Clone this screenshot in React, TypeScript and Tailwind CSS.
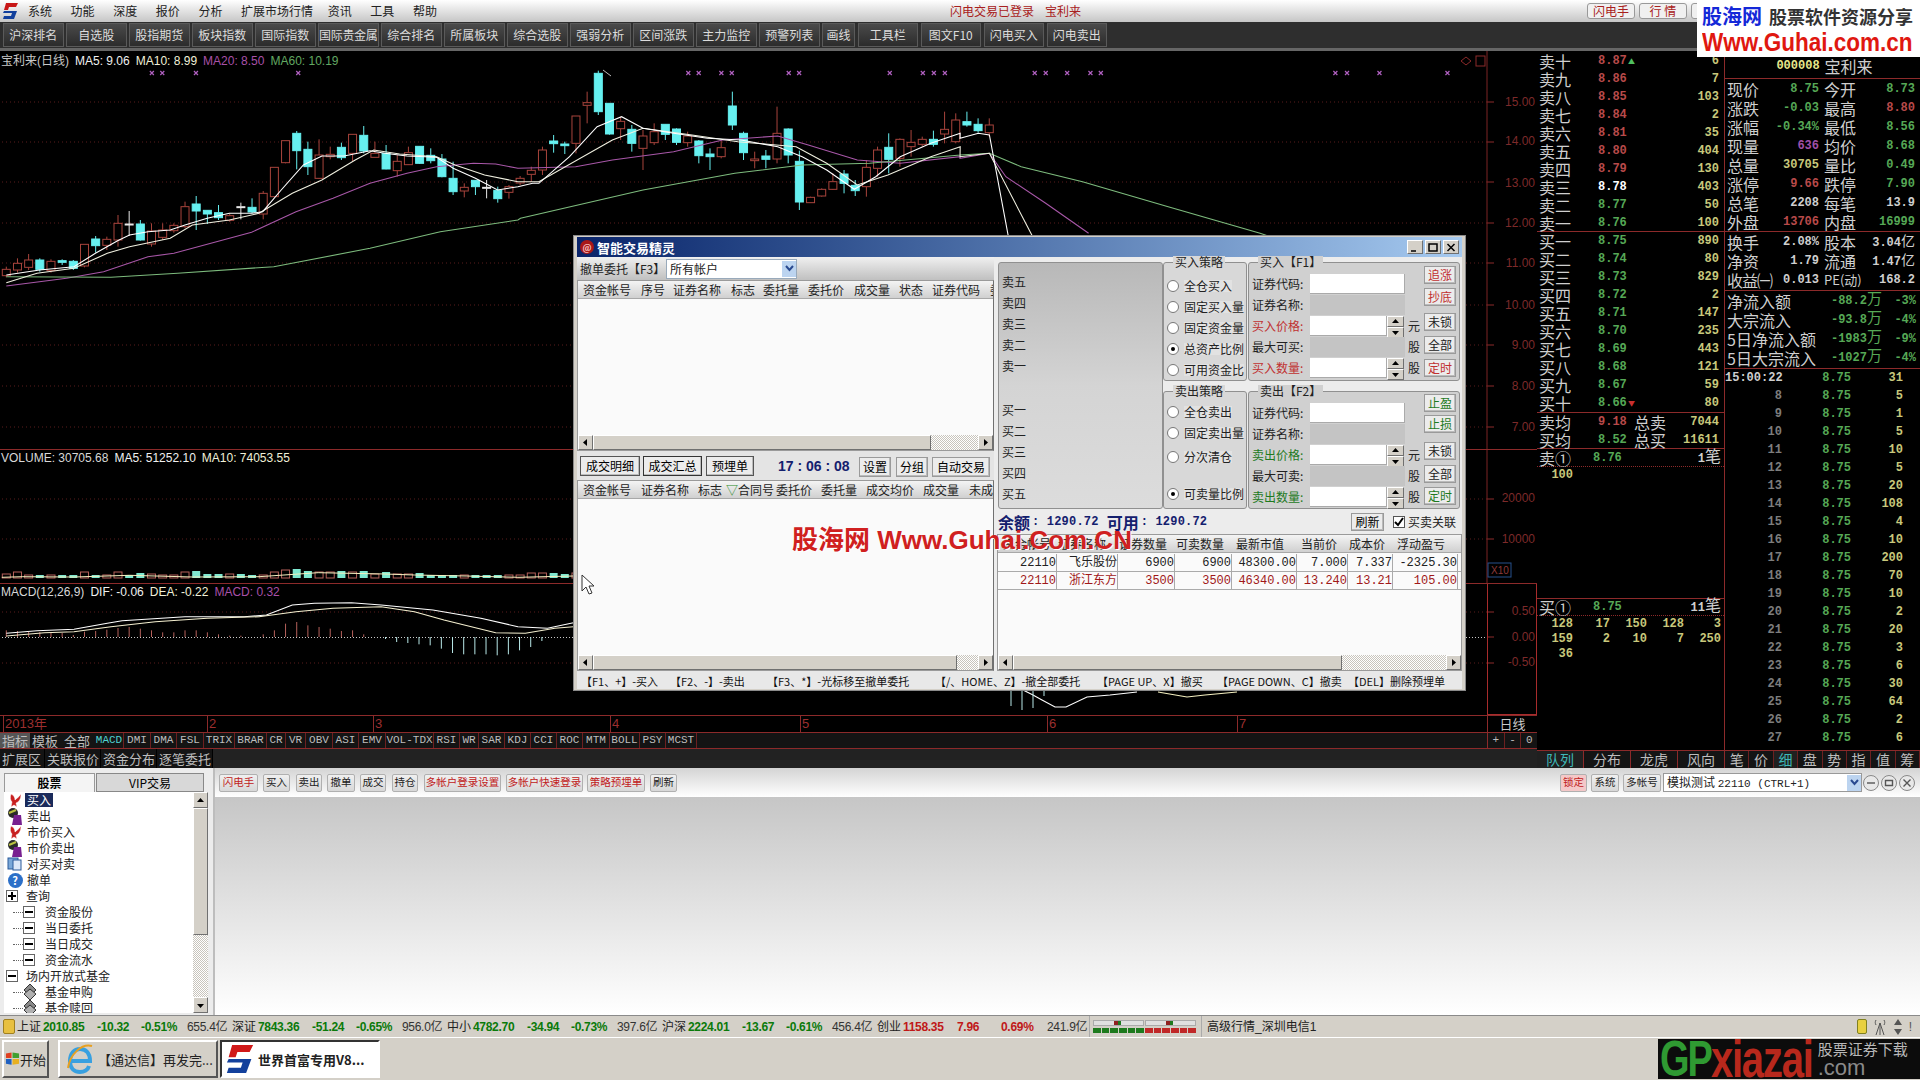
import type { ReactNode } from "react";

const MONO = "font-['Liberation_Mono','Noto_Sans_CJK_SC',monospace]";

type Pt = [number, number];
const z10 = (p: Pt[]): Pt[] => p.map(([x, y]) => [x / 2.703, 50 + y / 3]);
const z1 = (p: Pt[]): Pt[] => p.map(([x, y]) => [x / 1.633, y / 3]);
const z2 = (p: Pt[]): Pt[] => p.map(([x, y]) => [960 + x / 1.633, y / 3]);
const z9 = (p: Pt[]): Pt[] => p.map(([x, y]) => [x / 2.703, 440 + y / 3]);
const toPts = (p: Pt[]) => p.map(([x, y]) => `${x.toFixed(1)},${y.toFixed(1)}`).join(" ");

type Candle = [string, number, number, number, number];
const c10: Candle[] = [
  ["r", 650, 658, 677, 682], ["r", 625, 640, 660, 668], ["r", 612, 630, 652, 660], ["c", 625, 630, 658, 665],
  ["r", 628, 634, 662, 668], ["c", 628, 632, 637, 645], ["c", 630, 634, 655, 660], ["r", 583, 583, 648, 652],
  ["c", 558, 567, 587, 608], ["r", 560, 568, 586, 600], ["r", 495, 520, 570, 590], ["w", 483, 522, 524, 558],
  ["c", 510, 522, 570, 572], ["r", 520, 543, 582, 590], ["r", 520, 540, 562, 570], ["r", 520, 526, 542, 548],
  ["r", 455, 470, 530, 535], ["c", 438, 462, 483, 540], ["c", 480, 481, 492, 522], ["c", 465, 488, 503, 510],
  ["r", 490, 497, 511, 515], ["w", 458, 470, 472, 508], ["c", 445, 472, 486, 490], ["r", 423, 430, 492, 508],
  ["r", 352, 352, 440, 442], ["r", 272, 272, 338, 340], ["c", 243, 250, 302, 358], ["c", 275, 298, 350, 375],
  ["r", 268, 315, 385, 387], ["r", 290, 313, 320, 328], ["c", 278, 292, 323, 330], ["r", 253, 253, 310, 335],
  ["c", 228, 256, 303, 310], ["r", 275, 310, 322, 322], ["c", 285, 310, 357, 358], ["r", 315, 334, 362, 380],
  ["r", 290, 308, 344, 345], ["c", 288, 289, 340, 342], ["c", 295, 316, 332, 340], ["c", 312, 327, 380, 382],
  ["c", 335, 385, 425, 435], ["r", 400, 412, 423, 442], ["c", 390, 391, 410, 435], ["w", 390, 412, 414, 445],
  ["c", 410, 421, 446, 458], ["r", 405, 410, 427, 446], ["r", 378, 385, 399, 405], ["r", 350, 361, 373, 395],
  ["r", 290, 300, 360, 375], ["c", 255, 273, 281, 308], ["c", 275, 282, 287, 312], ["r", 198, 198, 280, 310],
];
const c1: Candle[] = [
  ["r", 275, 308, 316, 370], ["c", 212, 220, 335, 345], ["c", 310, 310, 402, 404], ["r", 350, 364, 386, 420],
  ["c", 375, 388, 430, 455], ["r", 390, 408, 445, 510], ["r", 370, 395, 428, 435], ["c", 372, 373, 403, 420],
  ["c", 385, 387, 427, 435], ["r", 395, 408, 428, 440], ["c", 420, 423, 467, 490], ["c", 445, 462, 470, 510],
  ["r", 420, 443, 470, 475], ["c", 275, 318, 375, 390], ["c", 395, 400, 458, 480], ["r", 455, 477, 482, 505],
  ["c", 450, 468, 478, 505], ["r", 320, 400, 477, 490], ["c", 385, 387, 465, 490], ["c", 452, 484, 606, 630],
  ["r", 590, 592, 608, 608], ["r", 565, 568, 588, 590], ["r", 520, 545, 568, 570], ["c", 510, 522, 550, 580],
  ["c", 540, 556, 572, 588], ["r", 480, 502, 560, 590], ["r", 440, 450, 505, 530], ["c", 400, 442, 478, 520],
  ["r", 415, 418, 475, 500], ["r", 390, 427, 440, 470], ["r", 410, 418, 433, 440], ["c", 392, 418, 433, 440],
  ["r", 335, 388, 402, 430], ["r", 340, 360, 425, 430], ["c", 335, 365, 375, 380], ["c", 355, 373, 392, 398],
  ["r", 355, 375, 398, 410],
];
const candles: Candle[] = [
  ...c10.map(([k, a, b, c, d]): Candle => [k, 50 + a / 3, 50 + b / 3, 50 + c / 3, 50 + d / 3]),
  ...c1.map(([k, a, b, c, d]): Candle => [k, a / 3, b / 3, c / 3, d / 3]),
];

const ma5 = [
  ...z10([[17, 675], [107, 660], [200, 650], [258, 610], [318, 572], [350, 555], [400, 545], [460, 540], [500, 525], [560, 505], [620, 490], [680, 490], [710, 485], [760, 420], [820, 345], [870, 318], [930, 318], [1000, 302], [1040, 310], [1100, 318], [1180, 322], [1225, 355], [1285, 385], [1345, 420], [1400, 410], [1440, 400]]),
  ...z1([[880, 550], [930, 470], [975, 380], [1015, 350], [1050, 385], [1100, 400], [1155, 415], [1210, 420], [1270, 440], [1310, 470], [1350, 510], [1395, 568], [1430, 530], [1470, 470], [1520, 430], [1568, 400]]),
  ...z2([[0, 415], [30, 400], [48, 405], [80, 720]]),
];
const ma10 = [
  ...z10([[17, 698], [100, 670], [200, 655], [290, 610], [350, 590], [460, 565], [520, 525], [620, 510], [700, 490], [790, 430], [870, 390], [960, 330], [1010, 300], [1080, 312], [1180, 320], [1230, 345], [1310, 375], [1400, 395], [1450, 395]]),
  ...z1([[880, 545], [1000, 420], [1050, 385], [1130, 405], [1205, 425], [1300, 440], [1350, 490], [1400, 555], [1450, 525], [1520, 470], [1568, 440]]),
  ...z2([[0, 470], [48, 460], [120, 715]]),
];
const ma20 = [
  ...z10([[17, 708], [180, 685], [280, 665], [400, 620], [470, 610], [680, 547], [800, 485], [900, 445], [1000, 400], [1100, 370], [1180, 350], [1280, 340], [1340, 342], [1400, 355]]),
  ...z1([[940, 500], [1000, 480], [1100, 455], [1180, 420], [1270, 408], [1320, 435], [1400, 480], [1470, 490], [1568, 470]]),
  ...z2([[0, 475], [48, 460], [75, 530], [140, 610], [210, 700]]),
];
const ma60 = [
  ...z10([[17, 680], [300, 682], [480, 670], [740, 650], [1000, 595], [1190, 545], [1400, 510]]),
  ...z1([[850, 655], [1050, 570], [1200, 520], [1310, 495], [1420, 490], [1568, 465]]),
  ...z2([[0, 465], [48, 460], [100, 500], [200, 545], [340, 620], [490, 700], [620, 780]]),
];
const dif = z9([[17, 580], [100, 572], [200, 568], [290, 550], [330, 542], [500, 530], [660, 530], [720, 525], [790, 495], [850, 490], [950, 488], [1030, 495], [1170, 510], [1300, 535], [1400, 560], [1480, 565], [1550, 548]]);
const dea = z9([[17, 588], [120, 578], [200, 575], [300, 560], [420, 545], [560, 535], [700, 530], [800, 515], [900, 505], [1030, 500], [1120, 515], [1200, 540], [1340, 578], [1420, 580], [1500, 565], [1550, 560]]);

const macdUp = [20, 18, 15, 15, 15, 12, 6, 16, 18, 22, 27, 30, 25, 20, 14, 14, 20, 20, 14, 8, 4, 4, 0, 8, 20, 40, 45, 35, 30, 25, 18, 20, 8];
const macdDown = [6, 15, 18, 22, 25, 35, 48, 52, 52, 52, 55, 52, 40, 30, 12];
const volH = [4, 6, 3, 3, 3, 3, 3, 6, 3, 3, 6, 3, 5, 4, 3, 3, 6, 7, 4, 4, 4, 4, 3, 3, 6, 8, 9, 7, 6, 6, 7, 6, 7, 4, 6, 4, 4, 5, 3, 3, 3, 3, 3, 3, 3, 3, 3, 5, 5, 5, 4, 5];
const xMarks = [...[248, 265, 320, 487, 1124, 1141, 1178, 1195, 1288, 1305, 1453, 1507, 1525, 1543].map((x) => x / 1.633), ...[122, 140, 175, 213, 230, 613, 632, 685, 796].map((x) => 960 + x / 1.633)];
const cx = (i: number) => 6.3 + 11.17 * i;

const axisY = [102, 142, 182, 223, 263, 305, 345, 386, 427];
const axisLabels: [string, number][] = [["15.00", 102], ["14.00", 141], ["13.00", 183], ["12.00", 223], ["11.00", 263], ["10.00", 305], ["9.00", 345], ["8.00", 386], ["7.00", 427], ["20000", 498], ["10000", 539], ["0.50", 611], ["0.00", 637], ["-0.50", 662]];

function ChartDrawing() {
  return (
    <svg className="absolute inset-0" width={1537} height={664} viewBox="0 51 1537 664" fill="none">
      {[...axisY, 499, 539, 612, 663].map((y) => (
        <line key={y} x1={2} x2={1487} y1={y} y2={y} stroke="#5a1c1c" strokeDasharray="1 3" />
      ))}
      <line x1={2} x2={1487} y1={637.5} y2={637.5} stroke="#c8c8c8" strokeDasharray="1 2" />
      {[...axisY, 499, 539, 612, 637, 663].map((y) => (
        <line key={y} x1={1487} x2={1494} y1={y} y2={y} stroke="#8c2a2a" />
      ))}
      {candles.map(([k, hi, top, bot, lo], i) => {
        const x = cx(i);
        const stroke = k === "r" ? "#a8443c" : k === "c" ? "#66f0f0" : "#e8e8e8";
        return (
          <g key={i}>
            <line x1={x} x2={x} y1={hi} y2={top} stroke={stroke} />
            <line x1={x} x2={x} y1={bot} y2={lo} stroke={stroke} />
            <rect x={x - 4} y={top} width={8} height={Math.max(bot - top, 1)} stroke={stroke} fill={k === "c" ? "#66f0f0" : "#000"} />
          </g>
        );
      })}
      <polyline points={toPts(ma20)} stroke="#a857a8" strokeWidth={1.1} />
      <polyline points={toPts(ma60)} stroke="#7dbb7d" strokeWidth={1.1} />
      <polyline points={toPts(ma10)} stroke="#f0f0e0" strokeWidth={1.1} />
      <polyline points={toPts(ma5)} stroke="#ffffff" strokeWidth={1.1} />
      {xMarks.map((x) => (
        <path key={x} d={`M${x - 2} 71L${x + 2} 75M${x + 2} 71L${x - 2} 75`} stroke="#b060c0" strokeWidth={1.2} />
      ))}
      <path d="M1466 57L1471 61L1466 65L1461 61Z" stroke="#8c2a2a" />
      <rect x={1476} y={56} width={9} height={10} stroke="#8c2a2a" />
      <path d="M603 70L611 76" stroke="#bbb" />
      {volH.map((h, i) => {
        const k = candles[i][0];
        const x = cx(i);
        return k === "r" ? (
          <rect key={i} x={x - 4} y={578 - h} width={8} height={h} stroke="#b5605a" />
        ) : (
          <rect key={i} x={x - 4} y={578 - h} width={8} height={h} fill="#7fe8d0" />
        );
      })}
      <polyline points={toPts(z9([[5, 412], [60, 410], [200, 411], [350, 406], [520, 411], [700, 410], [860, 398], [1040, 402], [1120, 405], [1260, 408], [1400, 412], [1550, 408]]))} stroke="#f5f0c0" />
      {macdUp.map((h, i) => (h ? <line key={i} x1={cx(i)} x2={cx(i)} y1={637 - h / 3} y2={637} stroke="#b5605a" /> : null))}
      {macdDown.map((h, i) => (
        <line key={i} x1={385.5 + 11.17 * i} x2={385.5 + 11.17 * i} y1={637} y2={637 + h / 3} stroke="#b8e8e8" />
      ))}
      <polyline points={toPts(dif)} stroke="#fff" strokeWidth={1.1} />
      <polyline points={toPts(dea)} stroke="#f5f0d0" strokeWidth={1.1} />
      <polyline points="1023,690 1033,695 1042,700 1055,707 1066,707 1087,697 1110,695 1137,692" stroke="#fff" strokeWidth={1.1} />
      <polyline points="1158,692 1187,697 1205,695 1237,692" stroke="#f5f0c0" strokeWidth={1.1} />
      {[1011, 1022, 1033, 1044].map((x, i) => (
        <line key={x} x1={x} x2={x} y1={690} y2={[706, 710, 708, 696][i]} stroke="#b8e8e8" />
      ))}
      <line x1={1487} x2={1487} y1={51} y2={583} stroke="#7c2424" />
      <rect x={1487.5} y={583.5} width={49} height={131} stroke="#a82c2c" />
      <rect x={1488} y={563} width={23} height={14} stroke="#27508c" />
    </svg>
  );
}

function Legend({ items, className }: { items: [string, string][]; className: string }) {
  return (
    <div className={`relative flex gap-[6px] pl-[1px] text-[12px] leading-[14px] whitespace-nowrap font-['Liberation_Sans','Noto_Sans_CJK_SC',sans-serif] ${className}`}>
      {items.map(([t, c]) => (
        <span key={t} className={c}>{t}</span>
      ))}
    </div>
  );
}

const chartFoot = [
  ["MACD", "w-[29px]", "text-[#4fd0d0]"], ["DMI", "w-[27px]", ""], ["DMA", "w-[26px]", ""], ["FSL", "w-[27px]", ""], ["TRIX", "w-[31px]", ""], ["BRAR", "w-[32px]", ""],
  ["CR", "w-[19px]", ""], ["VR", "w-[20px]", ""], ["OBV", "w-[27px]", ""], ["ASI", "w-[26px]", ""], ["EMV", "w-[27px]", ""], ["VOL-TDX", "w-[48px]", ""],
  ["RSI", "w-[26px]", ""], ["WR", "w-[19px]", ""], ["SAR", "w-[26px]", ""], ["KDJ", "w-[26px]", ""], ["CCI", "w-[26px]", ""], ["ROC", "w-[26px]", ""],
  ["MTM", "w-[27px]", ""], ["BOLL", "w-[30px]", ""], ["PSY", "w-[26px]", ""], ["MCST", "w-[31px]", ""],
];

function ChartColumn() {
  return (
    <div className="flex h-full w-[1537px] shrink-0 flex-col">
      <div className="relative h-[664px] bg-black">
        <ChartDrawing />
        <div className="relative flex h-[398px] flex-col pt-[3px]">
          <Legend
            className="text-[#d8d8d8]"
            items={[["宝利来(日线)", "text-[#c8c8c8]"], ["MA5: 9.06", "text-[#f0f0f0]"], ["MA10: 8.99", "text-[#f0f0d8]"], ["MA20: 8.50", "text-[#a850a8]"], ["MA60: 10.19", "text-[#62a862]"]]}
          />
        </div>
        <div className="relative h-[134px] border-t border-[#8c2a2a] pt-[1px]">
          <Legend className="w-[1487px]" items={[["VOLUME: 30705.68", "text-[#d8d8d8]"], ["MA5: 51252.10", "text-[#f0f0f0]"], ["MA10: 74053.55", "text-[#f0f0d8]"]]} />
        </div>
        <div className="relative h-[132px] border-t border-[#8c2a2a] pt-[1px]">
          <Legend className="w-[1487px]" items={[["MACD(12,26,9)", "text-[#d8d8d8]"], ["DIF: -0.06", "text-[#f0f0f0]"], ["DEA: -0.22", "text-[#f0f0d8]"], ["MACD: 0.32", "text-[#a850a8]"]]} />
        </div>
        {axisLabels.map(([t, y]) => (
          <span key={t} className="absolute right-[2px] -translate-y-1/2 text-[12px] leading-none text-[#7d2a2a] font-['Liberation_Sans',sans-serif]" style={{ top: y - 51 }}>
            {t}
          </span>
        ))}
        <span className="absolute left-[1491px] top-[514px] text-[10px] leading-[12px] text-[#8c3a3a] font-['Liberation_Sans',sans-serif]">X10</span>
      </div>

      <div className="flex h-[17px] border-t border-[#8c2a2a] bg-black">
        <div className="relative flex-1 border-r border-[#8c2a2a] text-[13px] leading-[16px] text-[#9c2f2f]">
          {[["2013年", 3], ["2", 207], ["3", 373], ["4", 610], ["5", 800], ["6", 1047], ["7", 1237]].map(([t, x]) => (
            <span key={t} className="absolute top-0 border-l border-[#8c2a2a] pl-[1px] font-['Liberation_Sans','Noto_Sans_CJK_SC',sans-serif]" style={{ left: x }}>
              {t}
            </span>
          ))}
        </div>
        <div className="w-[49px] text-center text-[13px] leading-[16px] text-[#c8c8c8]">日线</div>
      </div>

      <div className="flex h-[16px] border-t border-[#8c2a2a] bg-[#141414] text-[#bdbdbd]">
        <div className="flex w-[95px] text-[13px] leading-[15px]">
          <span className="w-[30px] bg-[#555] pl-[2px]">指标</span>
          <span className="w-[32px] pl-[2px]">模板</span>
          <span className="pl-[2px]">全部</span>
        </div>
        <div className={`flex text-[11px] leading-[15px] ${MONO}`}>
          {chartFoot.map(([t, w, c]) => (
            <span key={t} className={`border-r border-[#6c2020] text-center ${w} ${c}`}>{t}</span>
          ))}
        </div>
        <div className="flex-1 border-r border-[#8c2a2a]" />
        <div className={`flex w-[49px] text-center text-[11px] leading-[15px] ${MONO}`}>
          <span className="flex-1 border-r border-[#6c2020]">+</span>
          <span className="flex-1 border-r border-[#6c2020]">-</span>
          <span className="flex-1">0</span>
        </div>
      </div>

      <div className="flex h-[20px] border-t border-[#8c2a2a] bg-[#222] text-[13px] leading-[19px] whitespace-nowrap text-[#bdbdbd]">
        {[["扩展区", "w-[45px]"], ["关联报价", "w-[56px]"], ["资金分布", "w-[56px]"], ["逐笔委托", "w-[56px]"]].map(([t, w]) => (
          <span key={t} className={`border-r border-black bg-[#141414] pl-[2px] ${w}`}>{t}</span>
        ))}
      </div>
    </div>
  );
}

const asks: [string, string, string, string][] = [
  ["卖十", "8.87", "text-[#b84a4a]", "6"], ["卖九", "8.86", "text-[#b84a4a]", "7"], ["卖八", "8.85", "text-[#b84a4a]", "103"], ["卖七", "8.84", "text-[#b84a4a]", "2"], ["卖六", "8.81", "text-[#b84a4a]", "35"],
  ["卖五", "8.80", "text-[#b84a4a]", "404"], ["卖四", "8.79", "text-[#b84a4a]", "130"], ["卖三", "8.78", "text-white", "403"], ["卖二", "8.77", "text-[#56a856]", "50"], ["卖一", "8.76", "text-[#56a856]", "100"],
];
const bids: [string, string, string, string][] = [
  ["买一", "8.75", "text-[#56a856]", "890"], ["买二", "8.74", "text-[#56a856]", "80"], ["买三", "8.73", "text-[#56a856]", "829"], ["买四", "8.72", "text-[#56a856]", "2"], ["买五", "8.71", "text-[#56a856]", "147"],
  ["买六", "8.70", "text-[#56a856]", "235"], ["买七", "8.69", "text-[#56a856]", "443"], ["买八", "8.68", "text-[#56a856]", "121"], ["买九", "8.67", "text-[#56a856]", "59"], ["买十", "8.66", "text-[#56a856]", "80"],
];

const LBL = "text-[16px] leading-none text-[#cfcfcf] whitespace-nowrap";
const NUM = `text-[12px] font-bold leading-none ${MONO}`;

function BookRow({ row, mark }: { row: [string, string, string, string]; mark?: ReactNode }) {
  return (
    <div className="flex h-[18px] items-center">
      <span className={`w-[61px] pl-[2px] ${LBL}`}>{row[0]}</span>
      <span className={`w-[30px] ${NUM} ${row[2]}`}>{row[1]}</span>
      <span className="w-[12px] text-[7px] leading-none">{mark}</span>
      <span className={`flex-1 pr-[5px] text-right ${NUM} text-[#c8c87c]`}>{row[3]}</span>
    </div>
  );
}

function QueueRow({ cells }: { cells: string[] }) {
  return (
    <div className={`flex h-[15px] items-center ${NUM} text-[#c8c87c]`}>
      {cells.map((c, i) => (
        <span key={i} className={`text-right ${i === 0 ? "w-[36px]" : "w-[37px]"}`}>{c}</span>
      ))}
    </div>
  );
}

function BookColumn() {
  return (
    <div className="flex h-full w-[188px] shrink-0 flex-col border-r border-[#8c2a2a]">
      <div className="mt-[1px] h-[180px] border-b border-[#8c2a2a]">
        {asks.map((r, i) => (
          <BookRow key={r[0]} row={r} mark={i === 0 ? <span className="text-[#4fc060]">▲</span> : undefined} />
        ))}
      </div>
      <div className="h-[181px] border-b border-[#8c2a2a]">
        {bids.map((r, i) => (
          <BookRow key={r[0]} row={r} mark={i === 9 ? <span className="text-[#c83030]">▼</span> : undefined} />
        ))}
      </div>
      <div className="h-[36px] border-b border-[#8c2a2a]">
        <div className="flex h-[18px] items-center">
          <span className={`w-[61px] pl-[2px] ${LBL}`}>卖均</span>
          <span className={`w-[36px] ${NUM} text-[#b84a4a]`}>9.18</span>
          <span className={`${LBL}`}>总卖</span>
          <span className={`flex-1 pr-[5px] text-right ${NUM} text-[#c8c87c]`}>7044</span>
        </div>
        <div className="flex h-[18px] items-center">
          <span className={`w-[61px] pl-[2px] ${LBL}`}>买均</span>
          <span className={`w-[36px] ${NUM} text-[#56a856]`}>8.52</span>
          <span className={`${LBL}`}>总买</span>
          <span className={`flex-1 pr-[5px] text-right ${NUM} text-[#c8c87c]`}>11611</span>
        </div>
      </div>
      <div className="flex h-[18px] items-center border-b border-dotted border-[#8c2a2a]">
        <span className={`w-[56px] pl-[2px] ${LBL}`}>卖①</span>
        <span className={`flex-1 ${NUM} text-[#56a856]`}>8.76</span>
        <span className={`pr-[3px] ${NUM} text-[#cfcfcf]`}>1<span className="text-[16px] font-normal">笔</span></span>
      </div>
      <QueueRow cells={["100"]} />
      <div className="h-[117px] border-b border-[#8c2a2a]" />
      <div className="flex h-[17px] items-center border-b border-dotted border-[#8c2a2a]">
        <span className={`w-[56px] pl-[2px] ${LBL}`}>买①</span>
        <span className={`flex-1 ${NUM} text-[#56a856]`}>8.75</span>
        <span className={`pr-[3px] ${NUM} text-[#cfcfcf]`}>11<span className="text-[16px] font-normal">笔</span></span>
      </div>
      <QueueRow cells={["128", "17", "150", "128", "3"]} />
      <QueueRow cells={["159", "2", "10", "7", "250"]} />
      <QueueRow cells={["36"]} />
    </div>
  );
}

const quote: [string, string, string, string, string, string][] = [
  ["现价", "8.75", "text-[#56a856]", "今开", "8.73", "text-[#56a856]"],
  ["涨跌", "-0.03", "text-[#56a856]", "最高", "8.80", "text-[#b84a4a]"],
  ["涨幅", "-0.34%", "text-[#56a856]", "最低", "8.56", "text-[#56a856]"],
  ["现量", "636", "text-[#a050a8]", "均价", "8.68", "text-[#56a856]"],
  ["总量", "30705", "text-[#c8c87c]", "量比", "0.49", "text-[#56a856]"],
  ["涨停", "9.66", "text-[#b84a4a]", "跌停", "7.90", "text-[#56a856]"],
  ["总笔", "2208", "text-[#cfcfcf]", "每笔", "13.9", "text-[#cfcfcf]"],
  ["外盘", "13706", "text-[#b84a4a]", "内盘", "16999", "text-[#56a856]"],
];
const share: [string, ReactNode, string, ReactNode][] = [
  ["换手", "2.08%", "股本", <>3.04<span className="text-[14px] font-normal">亿</span></>],
  ["净资", "1.79", "流通", <>1.47<span className="text-[14px] font-normal">亿</span></>],
  ["收益㈠", "0.013", "PE(动)", "168.2"],
];
const flows: [string, string, string][] = [
  ["净流入额", "-88.2", "-3%"],
  ["大宗流入", "-93.8", "-4%"],
  ["5日净流入额", "-1983", "-9%"],
  ["5日大宗流入", "-1027", "-4%"],
];
const ticks: [string, string][] = [
  ["15:00:22", "31"], ["8", "5"], ["9", "1"], ["10", "5"], ["11", "10"], ["12", "5"], ["13", "20"], ["14", "108"], ["15", "4"], ["16", "10"], ["17", "200"],
  ["18", "70"], ["19", "10"], ["20", "2"], ["21", "20"], ["22", "3"], ["23", "6"], ["24", "30"], ["25", "64"], ["26", "2"], ["27", "6"],
];

function QuoteColumn() {
  return (
    <div className="flex h-full flex-1 flex-col">
      <div className="flex h-[28px] items-center justify-center border-b border-[#8c2a2a] pt-[3px] pl-[4px]">
        <span className={`mr-[5px] ${NUM} text-[#e8e88c]`}>000008</span>
        <span className={LBL}>宝利来</span>
      </div>
      <div className="h-[153px] border-b border-[#8c2a2a]">
        {quote.map((q) => (
          <div key={q[0]} className="flex h-[19px] items-center">
            <div className="flex w-[94px] items-center justify-between pl-[2px]">
              <span className={LBL}>{q[0]}</span>
              <span className={`${NUM} ${q[2]}`}>{q[1]}</span>
            </div>
            <div className="ml-[5px] flex w-[91px] items-center justify-between">
              <span className={LBL}>{q[3]}</span>
              <span className={`${NUM} ${q[5]}`}>{q[4]}</span>
            </div>
          </div>
        ))}
      </div>
      <div className="h-[59px] border-b border-[#8c2a2a]">
        {share.map((q) => (
          <div key={q[0]} className="flex h-[19px] items-center">
            <div className="flex w-[94px] items-center justify-between pl-[2px]">
              <span className={`${LBL} ${q[0].length > 2 ? "tracking-[-1px]" : ""}`}>{q[0]}</span>
              <span className={`${NUM} text-[#cfcfcf]`}>{q[1]}</span>
            </div>
            <div className="ml-[5px] flex w-[91px] items-center justify-between">
              <span className={`${q[2].length > 2 ? "text-[13px] leading-none whitespace-nowrap text-[#cfcfcf]" : LBL}`}>{q[2]}</span>
              <span className={`${NUM} text-[#cfcfcf]`}>{q[3]}</span>
            </div>
          </div>
        ))}
      </div>
      <div className="h-[78px] border-b border-[#8c2a2a]">
        {flows.map((f) => (
          <div key={f[0]} className="flex h-[19px] items-center">
            <span className={`w-[100px] pl-[2px] ${LBL}`}>{f[0]}</span>
            <span className={`w-[57px] text-right ${NUM} text-[#56a856]`}>
              {f[1]}<span className="text-[15px] font-normal">万</span>
            </span>
            <span className={`w-[34px] text-right ${NUM} text-[#56a856]`}>{f[2]}</span>
          </div>
        ))}
      </div>
      {ticks.map((t, i) => (
        <div key={t[0]} className={`flex h-[18px] items-center ${NUM}`}>
          <span className={`w-[57px] text-right ${i === 0 ? "text-[#cfcfcf]" : "text-[#7d7d7d]"}`}>{t[0]}</span>
          <span className="w-[69px] text-right text-[#56a856]">8.75</span>
          <span className="w-[52px] text-right text-[#c8c87c]">{t[1]}</span>
        </div>
      ))}
    </div>
  );
}

function RightTabs() {
  const wide = [["队列", "text-[#3fb8b8] bg-[#202020]"], ["分布", ""], ["龙虎", ""], ["风向", ""]];
  const narrow = [["笔", ""], ["价", ""], ["细", "text-[#3fb8b8] bg-[#202020]"], ["盘", ""], ["势", ""], ["指", ""], ["值", ""], ["筹", ""]];
  return (
    <div className="flex h-[18px] border-t border-[#8c2a2a] bg-[#141414] text-[14px] leading-[17px] text-[#bdbdbd]">
      <div className="flex w-[188px]">
        {wide.map(([t, c]) => (
          <span key={t} className={`flex-1 border-r border-[#8c2a2a] text-center ${c}`}>{t}</span>
        ))}
      </div>
      <div className="flex flex-1">
        {narrow.map(([t, c]) => (
          <span key={t} className={`flex-1 border-r border-[#6c2020] text-center ${c}`}>{t}</span>
        ))}
      </div>
    </div>
  );
}

function Arrow({ dir }: { dir: "l" | "r" | "u" | "d" }) {
  const pts = { l: "6,1 2,4.5 6,8", r: "3,1 7,4.5 3,8", u: "1,6 4.5,2 8,6", d: "1,3 4.5,7 8,3" }[dir];
  return (
    <svg width={9} height={9}>
      <polygon points={pts} fill="#000" />
    </svg>
  );
}

const RAISED = "border border-t-white border-l-white border-r-[#707070] border-b-[#707070] bg-[#d4d0c8]";
const CHECKER = "bg-[repeating-conic-gradient(#c8c4bc_0_25%,#ffffff_0_50%)] bg-[length:2px_2px]";

function HScroll({ thumb }: { thumb: string }) {
  return (
    <div className={`flex h-[15px] shrink-0 ${CHECKER}`}>
      <div className={`flex w-[15px] items-center justify-center ${RAISED}`}><Arrow dir="l" /></div>
      <div className={`${thumb} ${RAISED}`} />
      <div className="flex-1" />
      <div className={`flex w-[15px] items-center justify-center ${RAISED}`}><Arrow dir="r" /></div>
    </div>
  );
}

function Head({ cols }: { cols: [string, string][] }) {
  return (
    <div className="flex h-[18px] shrink-0 items-center overflow-hidden border-b border-[#a8a8a8] bg-gradient-to-b from-[#f4f4f4] to-[#d0d0d0] pl-[5px] text-[12px] leading-none whitespace-nowrap text-[#222]">
      {cols.map(([t, w]) => (
        <span key={t} className={`shrink-0 ${w}`}>
          {t[0] === "▽" ? <><span className="text-[#2a8a2a]">▽</span>{t.slice(1)}</> : t}
        </span>
      ))}
    </div>
  );
}

function WinBtn({ children, className = "" }: { children: ReactNode; className?: string }) {
  return (
    <div className={`flex items-center justify-center border border-[#9a9a9a] bg-[#ececec] text-[12px] leading-none shadow-[inset_-1px_-1px_0_#bbb] ${className}`}>
      {children}
    </div>
  );
}

function Radio({ on, label, className = "" }: { on?: boolean; label: string; className?: string }) {
  return (
    <div className={`flex h-[21px] items-center pl-[3px] ${className}`}>
      <span className="flex size-[12px] items-center justify-center rounded-full border border-[#777] bg-white">
        {on && <span className="size-[4px] rounded-full bg-black" />}
      </span>
      <span className="ml-[5px] bg-[#e2e2e2] text-[12px] leading-none text-[#222]">{label}</span>
    </div>
  );
}

function Spin() {
  return (
    <div className="flex h-[20px] w-[17px] flex-col">
      <div className={`flex flex-1 items-center justify-center ${RAISED}`}><Arrow dir="u" /></div>
      <div className={`flex flex-1 items-center justify-center ${RAISED}`}><Arrow dir="d" /></div>
    </div>
  );
}

function FormRow({ label, kind, unit, tint }: { label: string; kind: "in" | "off" | "spin"; unit?: string; tint?: string }) {
  return (
    <div className="flex h-[21px] items-center">
      <span className={`w-[58px] text-[12px] leading-none ${tint ?? "text-[#222]"}`}>{label}:</span>
      {kind === "spin" ? (
        <div className="flex w-[95px]">
          <div className="h-[20px] w-[77px] border-r border-b border-[#aaa] bg-white" />
          <Spin />
        </div>
      ) : (
        <div className={`h-[20px] w-[95px] ${kind === "in" ? "border-r border-b border-[#aaa] bg-white" : "bg-[#c4c4c4]"}`} />
      )}
      <span className="ml-[3px] text-[12px] leading-none text-[#222]">{unit}</span>
    </div>
  );
}

function ActionBtn({ label, className, tone }: { label: string; className: string; tone: string }) {
  return <WinBtn className={`h-[18px] w-[32px] ${tone} ${className}`}>{label}</WinBtn>;
}

function Dialog() {
  const head1: [string, string][] = [["资金帐号", "w-[58px]"], ["序号", "w-[32px]"], ["证券名称", "w-[58px]"], ["标志", "w-[32px]"], ["委托量", "w-[45px]"], ["委托价", "w-[46px]"], ["成交量", "w-[45px]"], ["状态", "w-[33px]"], ["证券代码", "w-[58px]"], ["委", "w-[14px]"]];
  const head2: [string, string][] = [["资金帐号", "w-[58px]"], ["证券名称", "w-[57px]"], ["标志", "w-[28px]"], ["▽合同号", "w-[50px]"], ["委托价", "w-[45px]"], ["委托量", "w-[45px]"], ["成交均价", "w-[57px]"], ["成交量", "w-[46px]"], ["未成", "w-[30px]"]];
  const posCols = ["w-[59px] justify-end", "w-[61px] justify-end", "w-[57px] justify-end", "w-[57px] justify-end", "w-[65px] justify-end", "w-[51px] justify-end", "w-[45px] justify-end", "w-[65px] justify-end"];
  const rows = [
    { cells: ["22110", "飞乐股份", "6900", "6900", "48300.00", "7.000", "7.337", "-2325.30"], tone: "text-[#222]" },
    { cells: ["22110", "浙江东方", "3500", "3500", "46340.00", "13.240", "13.21", "105.00"], tone: "text-[#a01818]" },
  ];
  return (
    <div className="absolute left-[574px] top-[236px] flex h-[454px] w-[891px] flex-col border-x-[3px] border-y-[1px] border-[#d4d0c8] bg-[#ececec] shadow-[0_0_0_1px_#8a8a8a]">
      <div className="flex h-[20px] shrink-0 items-center bg-gradient-to-r from-[#0a246a] to-[#a6caf0] pl-[3px] pr-[3px]">
        <span className="flex size-[14px] items-center justify-center rounded-full bg-[#a81818] text-[9px] font-bold leading-none text-[#f8c0c0]">@</span>
        <span className="ml-[3px] flex-1 text-[13px] font-bold leading-none text-white">智能交易精灵</span>
        {[0, 1, 2].map((i) => (
          <div key={i} className={`ml-[2px] flex h-[14px] w-[16px] items-center justify-center ${RAISED}`}>
            <svg width={10} height={9} stroke="#000" strokeWidth={1.5} fill="none">
              {i === 0 && <path d="M1 8H6" />}
              {i === 1 && <rect x={1} y={1} width={8} height={7} />}
              {i === 2 && <path d="M1.5 1L8.5 8M8.5 1L1.5 8" />}
            </svg>
          </div>
        ))}
      </div>

      <div className="flex flex-1">
        <div className="flex w-[417px] shrink-0 flex-col">
          <div className="flex h-[23px] shrink-0 items-center bg-gradient-to-b from-[#f0f0f0] to-[#c0c0c0] pl-[3px]">
            <span className="w-[86px] text-[12px] leading-none text-[#222]">撤单委托【F3】</span>
            <div className="flex h-[20px] w-[131px] items-center border border-[#9ab] bg-white pl-[3px] text-[12px] leading-none text-[#222]">
              <span className="flex-1">所有帐户</span>
              <span className="flex h-[16px] w-[14px] items-center justify-center bg-[#bcd4f0] text-[#1c3c88]">
                <svg width={9} height={7} fill="none" stroke="#2a4a90" strokeWidth={2}><path d="M1 1L4.5 5L8 1" /></svg>
              </span>
            </div>
          </div>
          <div className="flex h-[171px] shrink-0 flex-col border border-[#9a9a9a] border-r-[#707070]">
            <Head cols={head1} />
            <div className="flex-1 bg-[#fafafa]" />
            <HScroll thumb="w-[338px]" />
          </div>
          <div className="flex h-[29px] shrink-0 items-center bg-[#e4e4e4] pl-[3px]">
            <WinBtn className="h-[20px] w-[60px] border-[#555] shadow-[inset_-1px_-1px_0_#666]">成交明细</WinBtn>
            <WinBtn className="ml-[3px] h-[20px] w-[59px] border-[#333] bg-[#d8d8d8]">成交汇总</WinBtn>
            <WinBtn className="ml-[4px] h-[20px] w-[48px] border-[#555] shadow-[inset_-1px_-1px_0_#666]">预埋单</WinBtn>
            <span className="ml-[24px] w-[81px] text-[14px] font-bold leading-none text-[#14206e] font-['Liberation_Sans',sans-serif]">17 : 06 : 08</span>
            <WinBtn className="mt-[2px] h-[20px] w-[32px]">设置</WinBtn>
            <WinBtn className="ml-[5px] mt-[2px] h-[20px] w-[32px]">分组</WinBtn>
            <WinBtn className="ml-[4px] mt-[2px] h-[20px] w-[58px]">自动交易</WinBtn>
          </div>
          <div className="flex flex-1 flex-col border border-[#9a9a9a] border-r-[#707070]">
            <Head cols={head2} />
            <div className="flex-1 bg-[#fafafa]" />
            <HScroll thumb="w-[364px]" />
          </div>
        </div>

        <div className="ml-[3px] flex flex-1 flex-col">
          <div className="flex h-[252px] shrink-0 pt-[5px] pl-[1px] text-[12px] leading-none text-[#222]">
            <div className="flex h-[247px] w-[165px] flex-col rounded-[3px] border border-[#909090] bg-gradient-to-b from-[#b8b8b8] via-[#d4d4d4] to-[#dcdcdc] pl-[3px] pt-[9px] text-[12px]">
              {["卖五", "卖四", "卖三", "卖二", "卖一"].map((t) => (
                <div key={t} className="flex h-[20.8px] items-center">{t}</div>
              ))}
              <div className="h-[24px]" />
              {["买一", "买二", "买三", "买四", "买五"].map((t) => (
                <div key={t} className="flex h-[20.9px] items-center">{t}</div>
              ))}
            </div>
            <div className="flex w-[297px] flex-col">
              <div className="flex h-[119px]">
                <div className="relative h-full w-[84px] rounded-[3px] border border-[#909090] bg-[#d8d8d8] pt-[12px]">
                  <span className="absolute -top-[7px] left-[9px] bg-[#d8d8d8] px-[2px]">买入策略</span>
                  <Radio label="全仓买入" />
                  <Radio label="固定买入量" />
                  <Radio label="固定资金量" />
                  <Radio label="总资产比例" on />
                  <Radio label="可用资金比" />
                </div>
                <div className="relative ml-[1px] flex h-full w-[212px] rounded-[3px] border border-[#909090] bg-[#d0d0d0] pl-[3px]">
                  <span className="absolute -top-[7px] left-[9px] bg-[#d0d0d0] px-[2px]">买入【F1】</span>
                  <div className="w-[172px] pt-[10px]">
                    <FormRow label="证券代码" kind="in" />
                    <FormRow label="证券名称" kind="off" />
                    <FormRow label="买入价格" kind="spin" unit="元" tint="text-[#c03030]" />
                    <FormRow label="最大可买" kind="off" unit="股" />
                    <FormRow label="买入数量" kind="spin" unit="股" tint="text-[#c03030]" />
                  </div>
                  <div className="flex flex-col pt-[3px]">
                    <ActionBtn label="追涨" tone="text-[#c03030]" className="" />
                    <ActionBtn label="抄底" tone="text-[#c03030]" className="mt-[4px]" />
                    <ActionBtn label="未锁" tone="text-[#222]" className="mt-[7px]" />
                    <ActionBtn label="全部" tone="text-[#222]" className="mt-[5px]" />
                    <ActionBtn label="定时" tone="text-[#c03030]" className="mt-[5px]" />
                  </div>
                </div>
              </div>
              <div className="mt-[10px] flex h-[118px]">
                <div className="relative h-full w-[84px] rounded-[3px] border border-[#909090] bg-[#d8d8d8] pt-[9px]">
                  <span className="absolute -top-[7px] left-[9px] bg-[#d8d8d8] px-[2px]">卖出策略</span>
                  <Radio label="全仓卖出" />
                  <Radio label="固定卖出量" />
                  <Radio label="分次清仓" className="mt-[3px]" />
                  <Radio label="可卖量比例" on className="mt-[16px]" />
                </div>
                <div className="relative ml-[1px] flex h-full w-[212px] rounded-[3px] border border-[#909090] bg-[#d0d0d0] pl-[3px]">
                  <span className="absolute -top-[7px] left-[9px] bg-[#d0d0d0] px-[2px]">卖出【F2】</span>
                  <div className="w-[172px] pt-[10px]">
                    <FormRow label="证券代码" kind="in" />
                    <FormRow label="证券名称" kind="off" />
                    <FormRow label="卖出价格" kind="spin" unit="元" tint="text-[#1e7a1e]" />
                    <FormRow label="最大可卖" kind="off" unit="股" />
                    <FormRow label="卖出数量" kind="spin" unit="股" tint="text-[#1e7a1e]" />
                  </div>
                  <div className="flex flex-col pt-[2px]">
                    <ActionBtn label="止盈" tone="text-[#1e7a1e]" className="" />
                    <ActionBtn label="止损" tone="text-[#1e7a1e]" className="mt-[3px]" />
                    <ActionBtn label="未锁" tone="text-[#222]" className="mt-[9px]" />
                    <ActionBtn label="全部" tone="text-[#222]" className="mt-[5px]" />
                    <ActionBtn label="定时" tone="text-[#1e7a1e]" className="mt-[4px]" />
                  </div>
                </div>
              </div>
            </div>
          </div>

          <div className="flex h-[25px] shrink-0 items-center pl-[1px] pr-[6px] whitespace-nowrap">
            <div className="flex flex-1 items-center font-bold leading-none text-[#14206e]">
              <span className="text-[16px]">余额</span>
              <span className={`ml-[2px] text-[12px] tracking-[0.2px] ${MONO}`}>: 1290.72</span>
              <span className="ml-[8px] text-[16px]">可用</span>
              <span className={`ml-[2px] text-[12px] tracking-[0.2px] ${MONO}`}>: 1290.72</span>
            </div>
            <WinBtn className="h-[18px] w-[33px]">刷新</WinBtn>
            <span className="ml-[9px] flex size-[12px] items-center justify-center border border-[#555] bg-white">
              <svg width={10} height={10} fill="none" stroke="#000" strokeWidth={2}><path d="M1 5L4 8L9 1" /></svg>
            </span>
            <span className="ml-[3px] text-[12px] leading-none text-[#222]">买卖关联</span>
          </div>

          <div className="flex flex-1 flex-col border border-[#9a9a9a]">
            <Head cols={[["资金帐号", "w-[55px]"], ["证券名称", "w-[61px]"], ["证券数量", "w-[57px]"], ["可卖数量", "w-[60px]"], ["最新市值", "w-[65px]"], ["当前价", "w-[48px]"], ["成本价", "w-[48px]"], ["浮动盈亏", "w-[50px]"]]} />
            <div className="flex-1 bg-[#fafafa] pt-[1px]">
              {rows.map((r) => (
                <div key={r.cells[1]} className={`flex h-[18px] border-b border-[#aaa] text-[12px] ${MONO} ${r.tone}`}>
                  {r.cells.map((c, i) => (
                    <span key={i} className={`flex items-center border-r border-[#aaa] ${posCols[i]}`}>{c}</span>
                  ))}
                </div>
              ))}
            </div>
            <HScroll thumb="w-[329px]" />
          </div>
        </div>
      </div>

      <div className="relative h-[18px] shrink-0 bg-[#e8e8e8] text-[11px] leading-[20px] whitespace-nowrap text-[#111]">
        {[["【F1、+】-买入", 4], ["【F2、-】-卖出", 93], ["【F3、*】-光标移至撤单委托", 190], ["【/、HOME、Z】-撤全部委托", 358], ["【PAGE UP、X】撤买", 520], ["【PAGE DOWN、C】撤卖", 640], ["【DEL】删除预埋单", 771]].map(([t, x]) => (
          <span key={t} className="absolute top-0" style={{ left: x }}>{t}</span>
        ))}
      </div>
    </div>
  );
}

function MenuBar() {
  const menus = ["系统", "功能", "深度", "报价", "分析", "扩展市场行情", "资讯", "工具", "帮助"];
  return (
    <div className="flex h-[22px] shrink-0 items-center bg-gradient-to-b from-white to-[#c6c6c6] text-[12px] leading-none text-[#222]">
      <svg className="ml-[3px] mr-[10px]" width={15} height={16} viewBox="0 0 15 16">
        <path d="M3 0H15L13 4H6L5 7H1Z" fill="#c81818" />
        <path d="M1 8H14L11 16H0L1 13H8L9 10H0Z" fill="#12409c" />
      </svg>
      <div className="flex gap-[18.6px]">
        {menus.map((m) => (
          <span key={m} className={m.length > 2 ? "-mr-[4px]" : ""}>{m}</span>
        ))}
      </div>
      <span className="ml-[513px] text-[12px] text-[#a82020]">闪电交易已登录</span>
      <span className="ml-[11px] text-[#a82020]">宝利来</span>
      <div className="ml-[506px] flex gap-[4px]">
        <span className="flex h-[16px] w-[48px] items-center justify-center rounded-[3px] border border-[#999] bg-[#f0f0f0] text-[#a82020]">闪电手</span>
        <span className="flex h-[16px] w-[48px] items-center justify-center rounded-[3px] border border-[#999] bg-[#f0f0f0] text-[#a82020]">行 情</span>
        <span className="h-[16px] w-[48px] rounded-[3px] border border-[#999] bg-[#f0f0f0]" />
      </div>
    </div>
  );
}

function ToolBar() {
  const items = ["沪深排名", "自选股", "股指期货", "板块指数", "国际指数", "国际贵金属", "综合排名", "所属板块", "综合选股", "强弱分析", "区间涨跌", "主力监控", "预警列表", "画线", "工具栏", "图文F10", "闪电买入", "闪电卖出"];
  return (
    <div className="h-[29px] shrink-0 border-b-[3px] border-[#666] bg-[#2e2e2e] pl-[3px] pt-[1px]">
      <div className="flex gap-[2.5px]">
        {items.map((t) => (
          <span key={t} className={`flex h-[24px] items-center justify-center border border-[#5a5a5a] bg-gradient-to-b from-[#4a4a4a] to-[#2c2c2c] text-[12px] leading-none whitespace-nowrap text-[#dcdcdc] ${t === "画线" ? "w-[33px]" : "w-[60.5px]"} ${t === "国际贵金属" ? "tracking-[-0.3px]" : ""}`}>
            {t}
          </span>
        ))}
      </div>
    </div>
  );
}

function BuyIcon() {
  return (
    <svg width={16} height={16} viewBox="0 0 16 16">
      <path d="M4 2C7 3 8 6 8 8C10 6 12 5 14 2C14 7 12 10 9 11L10 15L7 13L4 15L5 10C3 8 3 5 4 2Z" fill="#c82020" stroke="#fff" strokeWidth={0.5} />
    </svg>
  );
}
function SellIcon() {
  return (
    <svg width={17} height={17} viewBox="0 0 17 17">
      <circle cx={6} cy={5} r={5} fill="#2a2a2a" />
      <path d="M2 5L9 2" stroke="#b8c040" strokeWidth={2} />
      <path d="M7 7H14L15 17H5Z" fill="#782090" />
    </svg>
  );
}
function OtherIcon() {
  return (
    <svg width={16} height={16} viewBox="0 0 16 16">
      <rect x={1} y={2} width={10} height={11} fill="#7aa8d8" stroke="#2a5a9a" />
      <rect x={6} y={4} width={8} height={10} fill="#dce8f8" stroke="#2a5a9a" />
    </svg>
  );
}
function HelpIcon() {
  return <span className="flex size-[15px] items-center justify-center rounded-full bg-[#2c70c8] text-[11px] font-bold leading-none text-white">?</span>;
}
function BoxSign({ plus }: { plus?: boolean }) {
  return (
    <span className="flex size-[12px] items-center justify-center border border-[#666] bg-white">
      <svg width={8} height={8} stroke="#000" strokeWidth={2}>
        <path d={plus ? "M0 4H8M4 0V8" : "M0 4H8"} />
      </svg>
    </span>
  );
}
function FundIcon() {
  return (
    <svg width={14} height={16} viewBox="0 0 14 16">
      <path d="M7 0L13 6L7 12L1 6Z" fill="#8a8a8a" stroke="#333" />
      <path d="M7 5L13 10L7 16L1 10Z" fill="#b0b0b0" stroke="#333" />
    </svg>
  );
}

function Tree() {
  const top: [ReactNode, string][] = [
    [<BuyIcon key="b" />, "买入"],
    [<SellIcon key="s" />, "卖出"],
    [<BuyIcon key="b2" />, "市价买入"],
    [<SellIcon key="s2" />, "市价卖出"],
    [<OtherIcon key="o" />, "对买对卖"],
    [<HelpIcon key="h" />, "撤单"],
  ];
  return (
    <div className="flex h-[221px] w-[204px] overflow-hidden">
      <div className="flex-1 overflow-hidden bg-white text-[12px] leading-none text-[#222]">
        {top.map(([ic, t], i) => (
          <div key={t} className="flex h-[16px] items-center pl-[1px]">
            <span className="flex w-[20px] justify-center">{ic}</span>
            <span className={`px-[2px] py-[1px] ${i === 0 ? "bg-[#1a2a5a] text-white" : ""}`}>{t}</span>
          </div>
        ))}
        <div className="flex h-[16px] items-center pl-[2px]">
          <BoxSign plus />
          <span className="ml-[8px]">查询</span>
        </div>
        {["资金股份", "当日委托", "当日成交", "资金流水"].map((t) => (
          <div key={t} className="flex h-[16px] items-center pl-[9px]">
            <span className="w-[10px] border-t border-dotted border-[#666]" />
            <BoxSign />
            <span className="ml-[10px]">{t}</span>
          </div>
        ))}
        <div className="flex h-[16px] items-center pl-[2px]">
          <BoxSign />
          <span className="ml-[8px]">场内开放式基金</span>
        </div>
        {["基金申购", "基金赎回"].map((t) => (
          <div key={t} className="flex h-[16px] items-center pl-[9px]">
            <span className="w-[10px] border-t border-dotted border-[#666]" />
            <FundIcon />
            <span className="ml-[8px]">{t}</span>
          </div>
        ))}
      </div>
      <div className={`flex w-[15px] flex-col ${CHECKER}`}>
        <div className={`flex h-[16px] items-center justify-center ${RAISED}`}><Arrow dir="u" /></div>
        <div className={`h-[127px] ${RAISED}`} />
        <div className="flex-1" />
        <div className={`flex h-[16px] items-center justify-center ${RAISED}`}><Arrow dir="d" /></div>
      </div>
    </div>
  );
}

function SmallBtn({ label, w, tone }: { label: string; w: string; tone: string }) {
  return (
    <span className={`flex h-[18px] items-center justify-center rounded-[2px] border border-[#b0b0b0] bg-gradient-to-b from-[#f0f0f0] to-[#d8d8d8] text-[10.5px] leading-none whitespace-nowrap ${w} ${tone}`}>
      {label}
    </span>
  );
}

function LowerPane() {
  return (
    <div className="flex h-[247px] shrink-0 bg-[#ececec]">
      <div className="flex w-[215px] shrink-0 flex-col border-r-[2px] border-[#bdbdbd] pl-[4px] pt-[5px]">
        <div className="flex h-[19px] w-[200px] text-[12px] leading-none">
          <span className="flex w-[91px] items-center justify-center border border-[#999] border-b-0 bg-[#f4f4f4] font-bold">股票</span>
          <span className="ml-[1px] flex w-[108px] items-center justify-center border border-[#888] bg-[#d8d8d8]">VIP交易</span>
        </div>
        <Tree />
      </div>
      <div className="flex flex-1 flex-col">
        <div className="flex h-[29px] shrink-0 items-center bg-gradient-to-b from-[#d4d4d4] to-white pl-[4px]">
          <SmallBtn label="闪电手" w="w-[39px]" tone="text-[#c02020]" />
          <SmallBtn label="买入" w="ml-[5px] w-[27px]" tone="text-[#222]" />
          <SmallBtn label="卖出" w="ml-[6px] w-[26px]" tone="text-[#222]" />
          <SmallBtn label="撤单" w="ml-[5px] w-[28px]" tone="text-[#222]" />
          <SmallBtn label="成交" w="ml-[5px] w-[26px]" tone="text-[#222]" />
          <SmallBtn label="持仓" w="ml-[6px] w-[26px]" tone="text-[#222]" />
          <SmallBtn label="多帐户登录设置" w="ml-[6px] w-[77px]" tone="text-[#c02020]" />
          <SmallBtn label="多帐户快速登录" w="ml-[5px] w-[77px]" tone="text-[#c02020]" />
          <SmallBtn label="策略预埋单" w="ml-[4px] w-[58px]" tone="text-[#c02020]" />
          <SmallBtn label="刷新" w="ml-[5px] w-[27px]" tone="text-[#222]" />
          <SmallBtn label="锁定" w="ml-[883px] w-[27px] bg-none bg-[#f4c8c8]" tone="text-[#c02020]" />
          <SmallBtn label="系统" w="ml-[4px] w-[28px]" tone="text-[#222]" />
          <SmallBtn label="多帐号" w="ml-[4px] w-[38px]" tone="text-[#222]" />
          <div className="ml-[2px] flex h-[19px] w-[199px] items-center border border-[#999] bg-white pl-[3px] text-[12px] leading-none text-[#222]">
            <span className="flex-1">模拟测试 <span className={`text-[11px] ${MONO}`}>22110 (CTRL+1)</span></span>
            <span className="flex h-[16px] w-[14px] items-center justify-center bg-[#bcd4f0]">
              <svg width={9} height={7} fill="none" stroke="#2a4a90" strokeWidth={2}><path d="M1 1L4.5 5L8 1" /></svg>
            </span>
          </div>
          <div className="ml-[1px] flex gap-[2px]">
            {["M4 8H12", "M4.5 5.5H11.5V10.5H4.5Z", "M4.5 4.5L11.5 11.5M11.5 4.5L4.5 11.5"].map((d) => (
              <svg key={d} width={16} height={16} viewBox="0 0 16 16" fill="none">
                <circle cx={8} cy={8} r={7.5} fill="#e8e8e8" stroke="#888" />
                <path d={d} stroke="#555" strokeWidth={1.4} />
              </svg>
            ))}
          </div>
        </div>
        <div className="flex-1 bg-gradient-to-b from-[#c6c6c6] to-white" />
      </div>
    </div>
  );
}

const indices = [
  { n: "上证", p: "2010.85", c: "-10.32", r: "-0.51%", a: "655.4亿", t: "text-[#0a7a0a]" },
  { n: "深证", p: "7843.36", c: "-51.24", r: "-0.65%", a: "956.0亿", t: "text-[#0a7a0a]" },
  { n: "中小", p: "4782.70", c: "-34.94", r: "-0.73%", a: "397.6亿", t: "text-[#0a7a0a]" },
  { n: "沪深", p: "2224.01", c: "-13.67", r: "-0.61%", a: "456.4亿", t: "text-[#0a7a0a]" },
  { n: "创业", p: "1158.35", c: "7.96", r: "0.69%", a: "241.9亿", t: "text-[#c01818]" },
];

function SignalBar({ hot }: { hot: string }) {
  return (
    <div className="flex w-[51px] flex-col gap-[2px]">
      <div className="relative h-[6px] border border-[#aaa] bg-[#e0e0e0]">
        <span className="absolute left-[20px] top-0 h-[4px] w-[4px] bg-[#902020]" />
        <span className="absolute left-[24px] top-0 h-[4px] w-[3px] bg-[#1e7a1e]" />
      </div>
      <div className="flex h-[5px] gap-[1px]">
        {[0, 1, 2, 3, 4, 5].map((i) => (
          <span key={i} className={`flex-1 ${hot}`} />
        ))}
      </div>
    </div>
  );
}

function StatusBar() {
  return (
    <div className="flex h-[22px] shrink-0 items-center border-t border-[#8a8a8a] bg-[#d4d0c8] text-[12px] leading-none whitespace-nowrap text-[#222] font-['Liberation_Sans','Noto_Sans_CJK_SC',sans-serif]">
      <span className="ml-[3px] mr-[2px] h-[15px] w-[12px] rounded-[2px] border border-[#a08020] bg-[#e8c040]" />
      {indices.map((x) => (
        <div key={x.n} className="flex w-[215px] shrink-0">
          <span className="w-[26px]">{x.n}</span>
          <span className={`w-[54px] font-bold tracking-[-0.3px] ${x.t}`}>{x.p}</span>
          <span className={`w-[44px] font-bold tracking-[-0.3px] ${x.t}`}>{x.c}</span>
          <span className={`w-[46px] font-bold tracking-[-0.3px] ${x.t}`}>{x.r}</span>
          <span className="tracking-[-0.3px] text-[#333]">{x.a}</span>
        </div>
      ))}
      <div className="-ml-[3px] flex h-full items-center gap-[1px] border-x border-[#aaa] pr-[5px] pl-[3px]">
        <SignalBar hot="bg-[#1e7a1e]" />
        <SignalBar hot="bg-[#c02828]" />
      </div>
      <span className="ml-[5px] flex-1">高级行情_深圳电信1</span>
      <div className="mr-[8px] flex items-center gap-[6px]">
        <span className="h-[15px] w-[10px] rounded-[2px] border border-[#808020] bg-[#e8d040]" />
        <svg width={14} height={18} fill="none" stroke="#555"><path d="M7 5V17M3 17L7 5L11 17M3 2C2 4 2 5 3 7M11 2C12 4 12 5 11 7" /></svg>
        <svg width={10} height={16} fill="#555"><path d="M5 0L9 6H1ZM5 16L1 10H9Z" /></svg>
        <span className="text-[#555]">!</span>
      </div>
    </div>
  );
}

function TaskBar() {
  return (
    <div className="flex h-[43px] shrink-0 items-center border-t border-white bg-[#d4d0c8] pl-[2px] text-[12px] leading-none text-[#222]">
      <div className="flex h-[38px] w-[47px] items-center justify-center whitespace-nowrap border-2 border-t-white border-l-white border-r-[#555] border-b-[#555]">
        <svg width={15} height={16} viewBox="0 0 16 16">
          <path d="M1 2L7 1V7H1Z" fill="#e04020" />
          <path d="M8 1L15 2V7H8Z" fill="#40a030" />
          <path d="M1 8H7V14L1 13Z" fill="#2060c0" />
          <path d="M8 8H15V13L8 14Z" fill="#e8b020" />
        </svg>
        <span className="text-[13px]">开始</span>
      </div>
      <div className="ml-[9px] flex h-[38px] w-[160px] items-center border-2 border-t-white border-l-white border-r-[#555] border-b-[#555] pl-[5px]">
        <svg width={30} height={34} viewBox="0 0 30 34" fill="none">
          <path d="M5 19H25C25 10 20 7 15 7C9 7 5 12 5 19C5 27 10 30 15 30C19 30 23 28 24 24" stroke="#38a0e0" strokeWidth={4} />
          <path d="M3 26C5 12 17 1 27 4" stroke="#e8a020" strokeWidth={2} />
        </svg>
        <span className="ml-[3px] whitespace-nowrap text-[13px]">【通达信】再发完...</span>
      </div>
      <div className="ml-[2px] flex h-[38px] w-[160px] items-center border-2 border-t-[#333] border-l-[#333] border-r-white border-b-white bg-white pl-[4px]">
        <svg width={28} height={28} viewBox="0 0 15 16">
          <path d="M3 0H15L13 4H6L5 7H1Z" fill="#d01818" />
          <path d="M1 8H14L11 16H0L1 13H8L9 10H0Z" fill="#12409c" />
        </svg>
        <span className="ml-[4px] whitespace-nowrap text-[13px] font-bold">世界首富专用V8...</span>
      </div>
      <div className="ml-auto flex h-[40px] w-[262px] items-center bg-[#0c0c0c]">
        <span className="ml-[2px] origin-left scale-y-[1.3] text-[38px] font-bold leading-[30px] tracking-[-2px] text-[#2f9a32] font-['Liberation_Sans',sans-serif]">GP</span>
        <span className="origin-left scale-y-[1.3] text-[40px] font-bold leading-[30px] tracking-[-1.2px] text-[#b8281c] font-['Liberation_Sans',sans-serif]">xiazai</span>
        <div className="ml-[5px] flex flex-col items-start">
          <span className="text-[15px] leading-[18px] whitespace-nowrap text-[#b8b8b8]">股票证券下载</span>
          <span className="text-[22px] leading-[20px] text-[#8a8a8a] font-['Liberation_Sans',sans-serif]">.com</span>
        </div>
      </div>
    </div>
  );
}

export default function App() {
  return (
    <div className="relative flex h-[1080px] w-[1920px] flex-col overflow-hidden bg-black font-['Noto_Sans_CJK_SC','Liberation_Sans',sans-serif]">
      <MenuBar />
      <ToolBar />
      <div className="flex h-[717px] shrink-0 border-b-[1px] border-[#c8b8b8]">
        <ChartColumn />
        <div className="flex flex-1 flex-col">
          <div className="flex h-[699px] shrink-0">
            <BookColumn />
            <QuoteColumn />
          </div>
          <RightTabs />
        </div>
      </div>
      <LowerPane />
      <StatusBar />
      <TaskBar />

      <Dialog />

      <div className="absolute left-[792px] top-[523px] text-[26px] font-bold leading-[34px] whitespace-nowrap text-[#d02020] [text-shadow:1px_1px_0_#ffffff] font-['Liberation_Sans','Noto_Sans_CJK_SC',sans-serif]">
        股海网 Www.Guhai.Com.CN
      </div>

      <svg className="absolute left-[581px] top-[574px]" width={14} height={22} viewBox="0 0 14 22">
        <path d="M1 1V17L5 13L8 20L11 19L8 12H13Z" fill="#fff" stroke="#333" />
      </svg>

      <div className="absolute right-0 top-0 flex h-[57px] w-[223px] flex-col overflow-hidden whitespace-nowrap bg-white pl-[5px]">
        <div className="flex h-[32px] items-center">
          <span className="text-[20px] font-bold leading-none text-[#1428d8]">股海网</span>
          <span className="ml-[7px] text-[18px] font-bold leading-none text-[#333]">股票软件资源分享</span>
        </div>
        <div className="origin-left scale-y-[1.15] text-[22.5px] font-bold leading-[22px] text-[#e01810] font-['Liberation_Sans',sans-serif]">Www.Guhai.com.cn</div>
      </div>
    </div>
  );
}
